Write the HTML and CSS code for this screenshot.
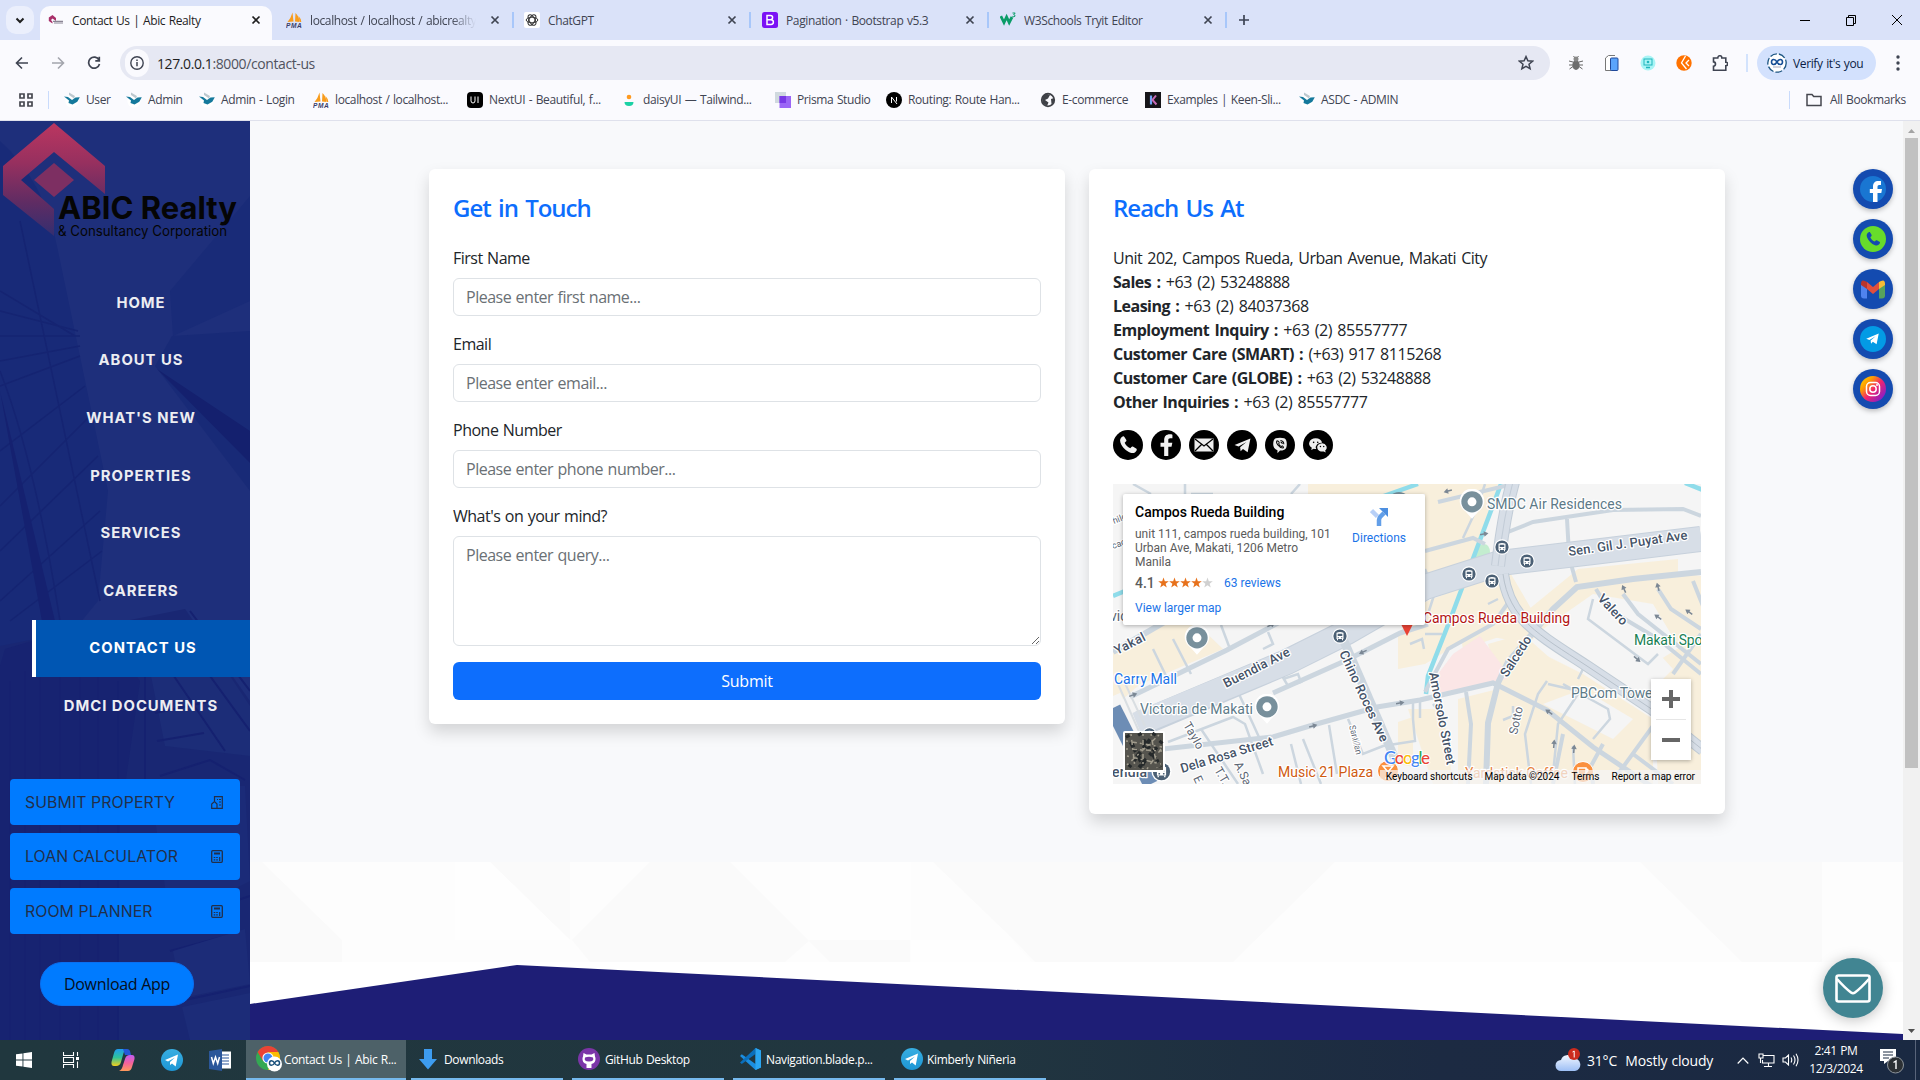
FILE: index.html
```html
<!DOCTYPE html>
<html lang="en">
<head>
<meta charset="utf-8">
<title>Contact Us | Abic Realty</title>
<link rel="stylesheet" href="styles.css">
</head>
<body>
<svg class="defs" width="0" height="0">
  <defs>
    <linearGradient id="logoGrad" x1="0" y1="0" x2="0" y2="1"><stop offset="0" stop-color="#bb3660"/><stop offset=".35" stop-color="#97305f"/><stop offset=".7" stop-color="#602c63"/><stop offset="1" stop-color="#332e70"/></linearGradient>
    <linearGradient id="insta" x1="0" y1="0.1" x2="1" y2="1"><stop offset="0" stop-color="#ffd600"/><stop offset=".25" stop-color="#ff9a00"/><stop offset=".5" stop-color="#f0256e"/><stop offset=".85" stop-color="#8a1fc4"/><stop offset="1" stop-color="#5c2bd0"/></linearGradient>
    <linearGradient id="tg" x1="0" y1="0" x2="0" y2="1"><stop offset="0" stop-color="#37aee2"/><stop offset="1" stop-color="#1e96d4"/></linearGradient>
    <linearGradient id="cloud" x1="0" y1="0" x2="0" y2="1"><stop offset="0" stop-color="#f1f6ff"/><stop offset="1" stop-color="#9dbff5"/></linearGradient>
    <linearGradient id="copA" x1="0" y1="0" x2="0" y2="1"><stop offset="0" stop-color="#1f9bf0"/><stop offset=".5" stop-color="#2fc39a"/><stop offset="1" stop-color="#f4d11c"/></linearGradient>
    <linearGradient id="copB" x1="0" y1="0" x2="0" y2="1"><stop offset="0" stop-color="#c05cf2"/><stop offset=".5" stop-color="#f5629b"/><stop offset="1" stop-color="#ff9a5a"/></linearGradient>
    <symbol id="close" viewBox="0 0 10 10"><path d="M1.5 1.5l7 7M8.5 1.5l-7 7" stroke="currentColor" stroke-width="1.7"/></symbol>
    <symbol id="pma" viewBox="0 0 16 16"><path d="M6.5 0.5L7.5 9.5 1.5 10Q5 6 6.5 0.5zM9.5 1Q13.5 5 13.5 10L9 9.5zM12.5 4Q15.5 7 15.3 10l-1.3 0z" fill="#f89c1c"/><text x="0" y="16" font-family="Liberation Sans" font-weight="700" font-style="italic" font-size="6.6" textLength="15.5" fill="#3b3f6b">PMA</text></symbol>
    <symbol id="asdc" viewBox="0 0 16 16"><circle cx="8" cy="9" r="6.6" fill="#fff"/><path d="M5 .5l6 3.500-1 2.500L5 3z" fill="#bcc8cf"/><path d="M0 4.500l4 .5 4 3 3.500-2.500 4.300-.2-2.500 4.500L8.500 12.500 4.500 11l.5-2.500z" fill="#15799c"/></symbol>
    <symbol id="plane" viewBox="0 0 24 24"><path d="M2 11.5L22 3 18.5 20.5 12.6 16.4 9.6 19.4 9 14.2 17 7.5 7 13.4z" fill="currentColor"/></symbol>
    <symbol id="phone" viewBox="0 0 24 24"><path d="M5.6 1.8C3 3.2 1.7 5.6 3 9.2c2 5.4 6.600 10 12 12 3.400 1.200 6-.2 7.300-2.700.5-1 .2-1.700-.6-2.200l-3.400-2.200c-.8-.5-1.600-.4-2.200.3l-1.300 1.500C11.600 14.600 9.300 12.300 8 9.200l1.500-1.300c.7-.6.8-1.400.3-2.200L7.700 2.300c-.5-.8-1.200-.9-2.100-.5z" fill="currentColor"/></symbol>
    <symbol id="fb" viewBox="0 0 24 24"><path d="M10 24V14H6V9.600h4V7c0-4.400 2.300-6.600 6.200-6.600 1.200 0 2.300.1 2.800.3v4h-2.300c-1.700 0-2.200.8-2.200 2.100v2.800h4.400L18 14h-3.500v10z" fill="currentColor"/></symbol>
    <symbol id="bus" viewBox="-8 -8 16 16"><circle r="7.700" fill="#fff"/><circle r="6.600" fill="#4b6075"/><path d="M-3.500-3.200Q0-5 3.500-3.200V3H-3.500z" fill="#fff"/><path d="M-2.300-2.300h4.600V0H-2.300zM-2.300 1.200h1.200v1h-1.200zM1.100 1.200h1.200v1H1.100z" fill="#4b6075"/><path d="M-2.500 3v1.300M2.500 3v1.300" stroke="#fff"/></symbol>
    <symbol id="pin" viewBox="-12 -12 24 30"><path d="M0 16L-6 9A11.500 11.500 0 1 1 6 9z" fill="#fff"/><circle r="10" fill="#78909c"/><circle r="4.200" fill="#fff"/></symbol>
    <symbol id="calc" viewBox="0 0 12 13"><rect x=".7" y=".7" width="10.600" height="11.600" rx="1" fill="none" stroke="#212f4a" stroke-width="1.300"/><path d="M3 3.500h6" stroke="#212f4a" stroke-width="2"/><path d="M2.700 7.500h1.600M5.200 7.500h1.600M2.700 9.800h1.600M5.200 9.800h1.600M8.700 7v4" stroke="#212f4a" stroke-width="1.200"/></symbol>
    <symbol id="arr" viewBox="-5 -3 10 6"><path d="M-4 0H1" stroke="#7b8794" stroke-width="1.500"/><path d="M0-2.800L4.500 0 0 2.800z" fill="#7b8794"/></symbol>
  </defs>
</svg>

<header class="browser">
  <div class="tabstrip">
    <button class="tabsearch"><svg width="10" height="7"><path d="M1.500 1.500l3.500 3.500 3.500-3.500" fill="none" stroke="#1f1f1f" stroke-width="2"/></svg></button>
    <div class="tab active">
      <svg class="fav" viewBox="0 0 16 16"><path d="M4.500 3L8 6v3L4.500 6.500 3 8l1.500 2v1.500L.8 9V5.500z" fill="#a9306a"/><path d="M5 9.300h10M6 11h9" stroke="#8a8494" stroke-width="1.200"/></svg>
      <span>Contact Us | Abic Realty</span><svg class="x"><use href="#close"/></svg>
    </div>
    <div class="tab nosep-left">
      <svg class="fav"><use href="#pma"/></svg>
      <span class="fade">localhost / localhost / abicrealty</span><svg class="x"><use href="#close"/></svg>
    </div>
    <div class="tab">
      <svg class="fav" viewBox="0 0 16 16"><rect width="16" height="16" rx="2" fill="#fff"/><g fill="none" stroke="#333"><ellipse cx="8" cy="8" rx="5.800" ry="2.800"/><ellipse cx="8" cy="8" rx="5.800" ry="2.800" transform="rotate(60 8 8)"/><ellipse cx="8" cy="8" rx="5.800" ry="2.800" transform="rotate(120 8 8)"/></g></svg>
      <span>ChatGPT</span><svg class="x"><use href="#close"/></svg>
    </div>
    <div class="tab">
      <svg class="fav" viewBox="0 0 16 16"><rect width="16" height="16" rx="2.500" fill="#7b12f5"/><path d="M5 3.500h3.500a2 2 0 0 1 0 4.200H5zm0 4.200h4a2.300 2.300 0 0 1 0 4.800H5z" fill="none" stroke="#fff" stroke-width="1.500"/></svg>
      <span>Pagination · Bootstrap v5.3</span><svg class="x"><use href="#close"/></svg>
    </div>
    <div class="tab">
      <svg class="fav" viewBox="0 0 16 16"><path d="M.8 4l3.200 6.500 2.600-5.500 2.600 5.500L12 5" fill="none" stroke="#0a9c68" stroke-width="2.800"/><path d="M12.500 1h2.700l-1.500 1.700q2 .3 1.200 1.600-.8 1-2.500.1" fill="none" stroke="#0a9c68"/></svg>
      <span>W3Schools Tryit Editor</span><svg class="x"><use href="#close"/></svg>
    </div>
    <svg class="plus" width="12" height="12"><path d="M6 1v10M1 6h10" stroke="#3c4354" stroke-width="1.700"/></svg>
    <div class="wincontrols">
      <svg width="12" height="12"><path d="M1 6.500h10" stroke="#000"/></svg>
      <svg width="12" height="12"><path d="M1.500 3.500h7v8h-7zM3.500 3.500v-2h7v8h-2" fill="none" stroke="#000"/></svg>
      <svg width="12" height="12"><path d="M1 1l10 10M11 1L1 11" stroke="#000"/></svg>
    </div>
  </div>

  <div class="toolbar">
    <div class="navbtns">
      <svg width="14" height="14"><path d="M13 7H2M7 1.500L1.500 7 7 12.500" fill="none" stroke="#3f4452" stroke-width="1.600"/></svg>
      <svg width="14" height="14"><path d="M1 7h11M7 1.500L12.500 7 7 12.500" fill="none" stroke="#a3a5ad" stroke-width="1.600"/></svg>
      <svg width="14" height="14"><path d="M12 4A5.500 5.500 0 1 0 12.500 8M12.300.8v4H8.300" fill="none" stroke="#3f4452" stroke-width="1.700"/></svg>
    </div>
    <div class="omnibox">
      <div class="siteinfo"><svg width="16" height="16"><circle cx="8" cy="8" r="6.200" fill="none" stroke="#3f4452" stroke-width="1.400"/><path d="M8 7v4.200M8 4.500v1.400" stroke="#3f4452" stroke-width="1.500"/></svg></div>
      <span class="url"><b>127.0.0.1</b>:8000/contact-us</span>
      <svg class="star" viewBox="0 0 16 16"><path d="M8 1.600l1.900 4.200 4.600.4-3.500 3 1.100 4.500L8 11.300l-4.100 2.400L5 9.200l-3.500-3 4.600-.4z" fill="none" stroke="#3f4452" stroke-width="1.500"/></svg>
    </div>
    <div class="exts">
      <svg viewBox="0 0 16 16"><path d="M1 6l4 1M15 6l-4 1M1 10h14M1.500 14L5 11.500M14.500 14L11 11.500M5.500 1l1.500 2M10.500 1L9 3" stroke="#666" fill="none"/><ellipse cx="8" cy="10" rx="3.600" ry="5" fill="#6d6d6d"/><circle cx="8" cy="4" r="2.500" fill="#888"/></svg>
      <svg viewBox="0 0 16 16"><path d="M9 15.500H1.500V3l3-2.500H11" fill="#fff" stroke="#777"/><rect x="6.500" y="3" width="7.500" height="12.500" rx="1" fill="#5ba4fb" stroke="#20489a"/></svg>
      <svg viewBox="0 0 16 16"><circle cx="8" cy="8" r="7.500" fill="#a9f4f5"/><rect x="4" y="4" width="8" height="6" fill="none" stroke="#21b5bd"/><path d="M6 12.500h4" stroke="#21b5bd" stroke-width="1.500"/><circle cx="8" cy="7" r="1.300" fill="#21b5bd"/></svg>
      <svg viewBox="0 0 16 16"><circle cx="8" cy="8" r="7.700" fill="#ff7200"/><path d="M9.500 1L5.500 8l5 6M13 5l-3 3 3 3" fill="none" stroke="#fff" stroke-width="1.300"/></svg>
      <svg viewBox="0 0 16 16"><path d="M1.500 3h4.300q.2-2.500 2.200-2.200Q9.800.7 9.800 3h4v4.300q2 .2 2 1.700t-2 1.700v4.500H1.500v-4q2-.3 2-2.200T1.500 6.900z" fill="none" stroke="#3f4452" stroke-width="1.600"/></svg>
    </div>
    <div class="verify">
      <svg width="20" height="20" viewBox="0 0 20 20"><circle cx="10" cy="10" r="9.200" fill="#fff" stroke="#1d5683" stroke-width="1.300" stroke-dasharray="7 2"/><path d="M10 9C8 5.500 4.500 6 4.500 9s3.500 3.500 5.500 0 5.500-3 5.500 0-3.500 3.500-5.500 0z" fill="none" stroke="#174e95" stroke-width="1.600"/><path d="M6 14h8" stroke="#aab"/></svg>
      <span>Verify it's you</span>
    </div>
    <svg class="dots" width="4" height="18"><circle cx="2" cy="3" r="1.700"/><circle cx="2" cy="9" r="1.700"/><circle cx="2" cy="15" r="1.700"/></svg>
  </div>

  <div class="bookmarks">
    <svg class="apps" width="14" height="14"><path d="M1 1h4v4H1zM9 1h4v4H9zM1 9h4v4H1zM9 9h4v4H9z" fill="none" stroke="#45474f" stroke-width="1.700"/></svg>
    <div class="bmgrid">
      <a><svg><use href="#asdc"/></svg><span>User</span></a>
      <a><svg><use href="#asdc"/></svg><span>Admin</span></a>
      <a><svg><use href="#asdc"/></svg><span>Admin - Login</span></a>
      <a><svg><use href="#pma"/></svg><span>localhost / localhost...</span></a>
      <a><svg viewBox="0 0 16 16"><rect width="16" height="16" rx="4" fill="#000"/><path d="M4 4.500v4.300q0 2.200 2 2.200t2-2.200V4.500M11 4.500V11" stroke="#fff" fill="none"/></svg><span>NextUI - Beautiful, f...</span></a>
      <a><svg viewBox="0 0 16 16"><circle cx="8" cy="5" r="2.300" fill="#ff9a1f"/><path d="M3.500 10h9q0 4-4.500 4t-4.500-4z" fill="#1bd1a5"/></svg><span>daisyUI — Tailwind...</span></a>
      <a><svg viewBox="0 0 16 16"><path d="M0 0h11v11H0z" fill="#d0d9df"/><path d="M4.500 4H16v12H4.500z" fill="#9b66f6"/><path d="M4.500 4H11v7H4.500z" fill="#7939e6"/></svg><span>Prisma Studio</span></a>
      <a><svg viewBox="0 0 16 16"><circle cx="8" cy="8" r="8" fill="#000"/><path d="M5.500 11V5l5.500 7M10.500 5v4.500" stroke="#fff" fill="none"/></svg><span>Routing: Route Han...</span></a>
      <a><svg viewBox="0 0 16 16"><circle cx="8" cy="8" r="6.300" fill="#fafafe" stroke="#3f4147" stroke-width="1.700"/><path d="M2 5l4-3.500L10 3 8 6.500 5 8l3.500 2.500L7 14 2.500 11zM11 7l3-1v5l-2.500 1z" fill="#3f4147"/></svg><span>E-commerce</span></a>
      <a><svg viewBox="0 0 16 16"><rect width="16" height="16" fill="#16151a"/><path d="M6 3.500v9" stroke="#6fa3f5" stroke-width="2.200"/><path d="M11 3.500L7.500 8l4 4.500" stroke="#c86ab5" fill="none" stroke-width="2"/></svg><span>Examples | Keen-Sli...</span></a>
      <a><svg><use href="#asdc"/></svg><span>ASDC - ADMIN</span></a>
    </div>
    <div class="allbm"><svg width="16" height="14"><path d="M1 1.500h5l1.700 2H15v9H1z" fill="none" stroke="#45474f" stroke-width="1.500"/></svg><span>All Bookmarks</span></div>
  </div>
</header>

<div class="viewport">
  <aside class="sidebar">
    <svg class="skyline" viewBox="0 0 250 919" preserveAspectRatio="none">
      <rect width="250" height="919" fill="#1e2f7b"/>
      <path d="M0 20Q45 60 58 130L108 370 98 480 0 600z" fill="#182a78"/>
      <path d="M250 75L170 170 173 215 250 180z" fill="#192b78"/><path d="M250 210L172 215 155 245 250 370z" fill="#182a77"/>
      <path d="M157 248L250 310V342z" fill="#14206e"/>
      <path d="M20 100L100 480M0 170L75 215M0 190l78 20M0 215h80M0 240l80-15M0 265l80-30M0 330l85-65M0 385l90-90M0 430l98-95M0 480l100-90M10 500l92-70M0 250Q35 340 60 500" stroke="#152472" stroke-width="1.500" fill="none"/>
      <path d="M0 270L55 500 42 500Z" fill="#152170"/>
      <path d="M0 525L185 488 250 580V919H0z" fill="#192773"/>
      <path d="M5 528L100 500 140 560 120 700 118 919H0V545z" fill="#172371"/>
      <path d="M150 550l60-25 40 60v50l-85-10z" fill="#1c2d78"/>
      <path d="M155 592l57-12M157 620l47-8M160 655l50-16 35 20M170 830l75-20M175 800l75-25M180 880l70-15M190 490l60 80M150 520l75 110M170 500l80 110M118 560v359M145 540v120" stroke="#152170" stroke-width="2" fill="none"/>
      <path d="M150 665l95 0 5 95-80 40z" fill="#1b2b78"/><path d="M173 830l72-22 5 55-68 14zM182 886l68-14v47h-60z" fill="#1c2c78"/>
      <path d="M10 560L10 919M25 550V919M40 545V919M60 540V919M80 540V919M98 540V919" stroke="#162170" fill="none"/>
    </svg>
    <svg class="logo" width="250" height="128" viewBox="0 0 250 128">
      <path d="M54 2L105 45V73L54 31 21 59 54 88V115L3 74V45z" fill="url(#logoGrad)"/>
      <path d="M54 42L74 59 54 76 34 59z" fill="#7d2f62"/>
      <text x="58" y="98" class="logo-a" textLength="179" lengthAdjust="spacingAndGlyphs">ABIC Realty</text>
      <text x="58" y="115" class="logo-b" textLength="169" lengthAdjust="spacingAndGlyphs">&amp; Consultancy Corporation</text>
    </svg>
    <nav class="menu">
      <a>HOME</a><a>ABOUT US</a><a>WHAT'S NEW</a><a>PROPERTIES</a><a>SERVICES</a><a>CAREERS</a><a class="current">CONTACT US</a><a>DMCI DOCUMENTS</a>
    </nav>
    <div class="tools">
      <a>SUBMIT PROPERTY<svg width="12" height="13" viewBox="0 0 12 13"><path d="M3.500 5V.7h7.800v11.600H.7V8L3.500 5.500 6 8v4" fill="none" stroke="#212f4a" stroke-width="1.200"/><path d="M6 3.500h1M8 3.500h2M8 6h2M8 9h2" stroke="#212f4a" stroke-width="1.200"/></svg></a>
      <a>LOAN CALCULATOR<svg width="12" height="13"><use href="#calc"/></svg></a>
      <a>ROOM PLANNER<svg width="12" height="13"><use href="#calc"/></svg></a>
    </div>
    <a class="download">Download App</a>
  </aside>

  <main class="page">
    <section class="cards">
      <form class="card">
        <h2>Get in Touch</h2>
        <label>First Name</label><input placeholder="Please enter first name...">
        <label>Email</label><input placeholder="Please enter email...">
        <label>Phone Number</label><input placeholder="Please enter phone number...">
        <label>What's on your mind?</label><textarea placeholder="Please enter query..."></textarea>
        <button type="button" class="submit">Submit</button>
      </form>
      <div class="card">
        <h2>Reach Us At</h2>
        <ul class="contacts">
          <li class="addr">Unit 202, Campos Rueda, Urban Avenue, Makati City</li>
          <li><b>Sales :</b> +63 (2) 53248888</li>
          <li><b>Leasing :</b> +63 (2) 84037368</li>
          <li><b>Employment Inquiry :</b> +63 (2) 85557777</li>
          <li><b>Customer Care (SMART) :</b> (+63) 917 8115268</li>
          <li><b>Customer Care (GLOBE) :</b> +63 (2) 53248888</li>
          <li><b>Other Inquiries :</b> +63 (2) 85557777</li>
        </ul>
        <div class="social">
          <i><svg width="20" height="20"><use href="#phone"/></svg></i>
          <i><svg width="22" height="22"><use href="#fb"/></svg></i>
          <i><svg width="20" height="14" viewBox="0 0 20 14"><rect x=".5" y=".5" width="19" height="13" fill="#eee"/><path d="M1 1l9 7 9-7M1 13l6.500-6.500M19 13l-6.500-6.500" fill="none" stroke="#000" stroke-width="1.300"/></svg></i>
          <i><svg width="19" height="19"><use href="#plane"/></svg></i>
          <i><svg width="16" height="17" viewBox="0 0 18 20"><path d="M4 1.500Q9 0 14 1.500 17 3 17 8.500T14 15q-2 1-5 1l-3 3v-3.500Q1 14 1 8.500T4 1.500z" fill="#eee"/><path d="M5.500 4.500Q4 6 6.500 9.500t6 3.500q1.500-1-.8-2.500-1 .8-1.500.5Q8 9.500 7.500 8q1-.8.300-2T5.500 4.500zM9.500 4q4 .5 4 4.500M9.700 6q2 .3 2 2.300" fill="none" stroke="#000" stroke-width="1.200"/></svg></i>
          <i><svg width="20" height="17" viewBox="0 0 22 18"><path d="M8.500 1a7 5.800 0 0 0-4.300 10.500L3.500 14l2.800-1.400Q8 13 9 12.800A6 5 0 0 1 15.500 6 7 5.600 0 0 0 8.500 1z" fill="#eee"/><path d="M15.500 6.500a5.600 4.600 0 1 0 1.800 9l2.200 1.200-.6-2.200a5 4.600 0 0 0-3.400-8z" fill="#eee"/><g fill="#000"><circle cx="6.200" cy="5.500" r=".9"/><circle cx="10.700" cy="5.500" r=".9"/><circle cx="13.700" cy="10" r=".8"/><circle cx="17.300" cy="10" r=".8"/></g></svg></i>
        </div>
        <div class="map">
          <svg class="tiles" viewBox="0 0 588 300">
            <rect width="588" height="300" fill="#f5f5f5"/>
            <g fill="#f8efdc">
              <path d="M195 0H385L355 100 312 115V10H195z"/>
              <path d="M0 165L55 135 85 141 110 165 0 212z"/><path d="M312 118L395 85 430 145 415 160 365 150 345 160 312 180 285 185 285 150z"/>
              <path d="M465 85L565 75V88L588 92V200L540 120 480 110 430 145 410 130z"/>
              <path d="M345 140L400 115 410 145 350 165zM420 165L470 190 540 235V300H420L375 215z"/>
              <path d="M540 180L588 150V300H545zM295 225L320 300H340L330 225zM375 160L410 150 455 190 440 225 385 200zM0 195l25-8v15L10 215z"/>
              <path d="M385 205L440 232 460 300H345V215z"/><path d="M285 238l15-5v50l-15-3z"/>
            </g>
            <path d="M430 220L470 205 520 235 500 255zM475 175L530 215 560 185 510 130zM490 110L520 128 545 168 530 190z" fill="#f5f5f5"/>
            <path d="M367 152L388 180 394 195 378 199 325 209 325 190 340 170z" fill="#fbe6e6"/>
            <path d="M364 62q12-6 13 6 0 8-12 12l-7 2z" fill="#c3edcf"/>
            <path d="M0 112L12 107M265 14L305 0M388 0L367 56 337 136 315 192 313 210M572-1L590 6" stroke="#8fdcea" stroke-width="4.500" fill="none"/>
            <path d="M0 224L38 300" stroke="#6d8db5" stroke-width="16"/>
            <g stroke="#ccd6df" fill="none" stroke-width="5">
              <path d="M17 213L114 166 167 138M160 209L234 176 287 149 315 140M50 265L160 253 200 241 264 223 307 216 380 199 434 226 480 263 538 302"/>
              <path d="M0 168L55 136M414 156L395 178 385 199 375 239 373 300M414 156L440 125 464 103 520 95 588 88" stroke-width="6"/>
              <path d="M312 67L360 54 372 60M390 50L420 38 500 26 570 25 588 32M325 18L400 0M463 98L458 80M454 35l2 35M312 208L335 165 380 140 395 119M353 208L358 240 355 300" stroke-width="4"/>
              <path d="M483 105L495 125 545 155 588 190M510 110L525 130 588 180M545 105L558 125 588 145M580 97l10 25M588 150L560 190M545 235L505 290M490 260L478 282 480 300M520 270L560 300M450 250L440 300" stroke-width="4"/>
            </g>
            <g stroke="#ccd6df" fill="none" stroke-width="2.500">
              <path d="M72 0v10M78 10 100 10M20 0 38 10M178 10 187 0M40 165L57 200M60 155L78 190M108 141L117 165M155 148L160 160 150 165M165 185L175 202 188 198 185 190 170 195M125 208L140 240 150 262M55 258L120 233 132 240 150 290M178 260L188 300M190 255L208 300M216 241L224 290M235 235L250 270 270 262 302 257 300 235M300 235V215M88 245L125 300"/>
              <path d="M434 197L425 210 412 250 418 300M450 200L495 225 497 235 480 255M465 210L445 240 440 290M480 115L475 135 535 180 545 170M435 200L470 208M312 85l8 20M350 54l14-30 8-24M388 50l-3 30M322 108 315 130M312 150l17 0M297 160l12-5 2 10M465 195l6-12M400 222v10l-10 4M375 120l10-5M460 262l2 40M320 220l8 10M307 216v18"/>
            </g>
            <path d="M27 240L174 178 234 148 312 103 387 79 480 68 588 55" stroke="#c7d1dc" stroke-width="26" fill="none"/>
            <path d="M24 240L174 178 234 148 312 103 387 79 480 68 588 55" stroke="#d7dee7" stroke-width="24" fill="none"/>
            <path d="M385 82Q391 30 400-2" stroke="#c2ccd7" stroke-width="14" fill="none"/><path d="M385 82Q391 30 400-2" stroke="#d7dee7" stroke-width="12" fill="none"/><path d="M385 82Q391 30 400-2" stroke="#c2ccd7" fill="none"/>
            <path d="M390 90C396 135 425 150 474 182L540 226 590 266" stroke="#bfcad4" stroke-width="12" fill="none"/><path d="M390 90C396 135 425 150 474 182L540 226 590 266" stroke="#d7dee7" stroke-width="10" fill="none"/><path d="M390 90C396 135 425 150 474 182L540 226 590 266" stroke="#b7c1cb" fill="none"/>
            <path d="M230 155L282 275" stroke="#ccd6df" stroke-width="9"/>
            <path d="M32 242L10 195M28 252L5 200" stroke="#d9dee2" stroke-width="2"/>
            <g>
              <g transform="translate(20 211) rotate(-20)"><use href="#arr" x="-5" y="-3" width="10" height="6"/></g>
              <g transform="translate(158 141) rotate(-25)"><use href="#arr" x="-5" y="-3" width="10" height="6"/></g>
              <g transform="translate(250 168) rotate(155)"><use href="#arr" x="-5" y="-3" width="10" height="6"/></g>
              <g transform="translate(200 242) rotate(-15)"><use href="#arr" x="-5" y="-3" width="10" height="6"/></g>
              <g transform="translate(287 219) rotate(-10)"><use href="#arr" x="-5" y="-3" width="10" height="6"/></g>
              <g transform="translate(335 7) rotate(165)"><use href="#arr" x="-5" y="-3" width="10" height="6"/></g>
              <g transform="translate(371 50) rotate(-10)"><use href="#arr" x="-5" y="-3" width="10" height="6"/></g>
              <g transform="translate(511 105) rotate(-115)"><use href="#arr" x="-5" y="-3" width="10" height="6"/></g>
              <g transform="translate(545 103) rotate(-105)"><use href="#arr" x="-5" y="-3" width="10" height="6"/></g>
              <g transform="translate(545 133) rotate(-145)"><use href="#arr" x="-5" y="-3" width="10" height="6"/></g>
              <g transform="translate(576 128) rotate(-145)"><use href="#arr" x="-5" y="-3" width="10" height="6"/></g>
              <g transform="translate(524 175) rotate(40)"><use href="#arr" x="-5" y="-3" width="10" height="6"/></g>
              <g transform="translate(436 228) rotate(-145)"><use href="#arr" x="-5" y="-3" width="10" height="6"/></g>
              <g transform="translate(441 260) rotate(-85)"><use href="#arr" x="-5" y="-3" width="10" height="6"/></g>
              <g transform="translate(461 265) rotate(-85)"><use href="#arr" x="-5" y="-3" width="10" height="6"/></g>
            </g>
            <path d="M286 136h16l-8 16z" fill="#ea4335"/>
            <g class="lbl road">
              <text transform="translate(456 72) rotate(-8)" textLength="120">Sen. Gil J. Puyat Ave</text>
              <text transform="translate(484 115) rotate(47)" textLength="37">Valero</text>
              <text transform="translate(394 194) rotate(-57)" textLength="46">Salcedo</text>
              <text transform="translate(316 189) rotate(79)" textLength="94">Amorsolo Street</text>
              <text transform="translate(226 169) rotate(65)" textLength="99">Chino Roces Ave</text>
              <text transform="translate(113 204) rotate(-27)" textLength="73">Buendia Ave</text>
              <text transform="translate(4 171) rotate(-27)" textLength="33">Yakal</text>
              <text transform="translate(69 289) rotate(-17)" textLength="96">Dela Rosa Street</text>
              <text x="-1" y="293" font-size="14" textLength="35">endia</text>
            </g>
            <g class="lbl minor">
              <text transform="translate(404 251) rotate(-78)" textLength="28">Sotto</text>
              <text transform="translate(70 241) rotate(60)" textLength="29">Taylo</text>
              <text transform="translate(101 286) rotate(60)">T.T.</text>
              <text transform="translate(121 280) rotate(65)">A.Sa</text>
              <text transform="translate(80 294) rotate(65)">E.</text>
              <text transform="translate(236 242) rotate(76)" font-size="9" textLength="30">Santillan</text>
              <text transform="translate(1 40) rotate(-22)" font-size="9">hilo</text>
              <text transform="translate(0 65) rotate(-20)" font-size="9">cac</text>
              <text x="-3" y="137" font-size="14">vic</text>
            </g>
            <g class="lbl poi">
              <text x="374" y="25" textLength="135">SMDC Air Residences</text>
              <text x="27" y="230" textLength="113">Victoria de Makati</text>
              <text x="458" y="214" textLength="86">PBCom Tower</text>
              <text x="310" y="139" textLength="147" fill="#b31412">Campos Rueda Building</text>
              <text x="521" y="161" fill="#188054" textLength="73">Makati Spor</text>
              <text x="1" y="200" fill="#1a73e8" textLength="63">Carry Mall</text>
              <text x="165" y="293" fill="#cf5a10" textLength="95">Music 21 Plaza</text>
              <text x="352" y="294" fill="#e8833e" textLength="103">Yardstick Coffee</text>
            </g>
            <use href="#pin" x="346" y="5" width="26" height="32"/><use href="#pin" x="71" y="141" width="26" height="32"/><use href="#pin" x="141" y="210" width="26" height="32"/>
            <use href="#bus" x="381" y="55" width="16" height="16"/><use href="#bus" x="406" y="69" width="16" height="16"/><use href="#bus" x="348" y="82" width="16" height="16"/><use href="#bus" x="371" y="89" width="16" height="16"/><use href="#bus" x="219" y="144" width="16" height="16"/><use href="#bus" x="29" y="243" width="15" height="15"/><use href="#bus" x="38" y="277" width="21" height="21"/>
            <circle cx="286" cy="20" r="12" fill="#78909c"/>
            <g fill="#fa903e" stroke="#fff"><circle cx="275" cy="287" r="10.500"/><circle cx="470" cy="288" r="10.500"/></g>
            <path d="M270 282h10l-5 6zM275 287v7M272 294h6M465 284h8v5q-4 5-8 0zM473 285q4 0 0 4" stroke="#fff" fill="none" stroke-width="1.500"/>
            <text x="271" y="280" class="goog" textLength="46"><tspan fill="#4285f4">G</tspan><tspan fill="#ea4335">o</tspan><tspan fill="#fbbc04">o</tspan><tspan fill="#4285f4">g</tspan><tspan fill="#34a853">l</tspan><tspan fill="#ea4335">e</tspan></text>
          </svg>
          <div class="place">
            <div class="place-text">
              <h3>Campos Rueda Building</h3>
              <p>unit 111, campos rueda building, 101<br>Urban Ave, Makati, 1206 Metro<br>Manila</p>
              <div class="rating"><span>4.1</span><svg width="55" height="12" viewBox="0 0 55 12"><g fill="#e7711b"><path id="st" d="M5.500.5l1.300 3.800h4L7.600 6.700l1.200 3.900-3.300-2.400-3.300 2.400 1.200-3.900L.2 4.300h4z"/><use href="#st" x="11"/><use href="#st" x="22"/><use href="#st" x="33"/></g><path d="M49.500.5l1.300 3.800h4l-3.200 2.400 1.200 3.900-3.300-2.400-3.300 2.400 1.200-3.900-3.200-2.400h4z" fill="#d0d0d0"/></svg><a>63 reviews</a></div>
              <a class="larger">View larger map</a>
            </div>
            <div class="directions"><svg width="18" height="18"><path d="M1.500 2.500l6 6" stroke="#b8d0f7" stroke-width="4.500"/><path d="M9 18V12q0-2 1.500-3.500L14 5" fill="none" stroke="#639fe8" stroke-width="4.500"/><path d="M9 0h9v9z" fill="#4d8fe0"/></svg><span>Directions</span></div>
          </div>
          <svg class="sat" viewBox="0 0 42 41"><rect width="42" height="41" rx="2" fill="#fff"/><path d="M2 2h38v37H2z" fill="#55544e"/><g stroke="#25292a" stroke-width="4" stroke-dasharray="3 5 6 2"><path d="M4 4l18 34M16 2l22 34M32 2L6 36M39 10L14 39"/></g><g stroke="#a19c8d" stroke-width="1.500" stroke-dasharray="2 4 5 3"><path d="M3 10l36 6M3 18l36 2M4 25l34 8M8 3l4 34M20 3v35M28 3l6 34M4 34L36 4M24 38l14-20"/></g></svg>
          <div class="zoomctl"><span><svg width="18" height="18"><path d="M9 0v18M0 9h18" stroke="#666" stroke-width="4"/></svg></span><span><svg width="18" height="18"><path d="M0 9h18" stroke="#666" stroke-width="4"/></svg></span></div>
          <div class="credits"><span>Keyboard shortcuts</span><span>Map data ©2024</span><span>Terms</span><span>Report a map error</span></div>
        </div>
      </div>
    </section>
    <svg class="footer" viewBox="0 0 1653 178">
      <rect width="1653" height="178" fill="#fff"/><rect width="1653" height="100" fill="#fdfdfd"/>
      <g fill="#fafafa"><path d="M0 0H12L92 78V100H0zM240 0H320V78zM400 0H480L558 78H322zM322 78H558L580 100H340zM560 0V78L535 100H660V0H560zM683 0H764V78zM764 0H1085L983 100H785L764 78zM1390 0H1572V100H1492z"/></g>
      <path d="M560 0h101v78H560zM661 78h101l20 22H661zM205 0h35l80 78H205z" fill="#fefefe"/>
      <path d="M0 142L267 103 1653 172V178H0z" fill="#1e1e76"/>
    </svg>
    <div class="floaters">
      <i><svg width="26" height="26" viewBox="0 0 26 26"><circle cx="13" cy="13" r="13" fill="#1976d2"/><path d="M13 26V17H9.800v-4H13v-2.500C13 7 15 5 18.300 5H21v4h-2q-1.500 0-1.500 1.500V13H22l-.7 4h-3.800v9z" fill="#fff"/></svg></i>
      <i><svg class="wa" width="26" height="26" viewBox="0 0 26 26"><circle cx="13" cy="13" r="13" fill="#67dc2b"/><use href="#phone" x="5" y="5" width="16" height="16"/></svg></i>
      <i><svg width="26" height="26" viewBox="0 0 26 26"><path d="M1 8l6 4v10.500H4q-3 0-3-3z" fill="#4f83ee"/><path d="M25 8l-6 4v10.500h3q3 0 3-3z" fill="#56a35c"/><path d="M7 6l6 5 6-5v7l-6 5-6-5z" fill="#e04f3d"/><path d="M1 8q0-5 4-3l2 1v7L1 9z" fill="#b8352d"/><path d="M25 8q0-5-4-3l-2 1v7l6-4z" fill="#f5bb36"/></svg></i>
      <i><svg width="26" height="26" viewBox="0 0 26 26"><circle cx="13" cy="13" r="13" fill="#039be5"/><use href="#plane" x="5" y="5.500" width="15" height="15"/></svg></i>
      <i><svg width="26" height="26" viewBox="0 0 26 26"><circle cx="13" cy="13" r="13" fill="url(#insta)"/><rect x="6.500" y="6.500" width="13" height="13" rx="4" fill="none" stroke="#fff" stroke-width="1.500"/><circle cx="13" cy="13" r="3.200" fill="none" stroke="#fff" stroke-width="1.500"/><circle cx="17" cy="9" r="1" fill="#fff"/></svg></i>
    </div>
    <div class="mailbtn"><svg width="36" height="29"><rect x="1.500" y="1.500" width="33" height="26" rx="2" fill="none" stroke="#fff" stroke-width="2.600"/><path d="M2 5Q10 14 16 18.500q2 1.500 4 0Q26 14 34 5" fill="none" stroke="#fff" stroke-width="2.600"/></svg></div>
  </main>
  <div class="scrollbar"><svg width="7" height="4"><path d="M0 4L3.500 0 7 4z" fill="#a3a3a3"/></svg><div class="thumb"></div><svg width="7" height="4"><path d="M0 0h7L3.500 4z" fill="#505050"/></svg></div>
</div>

<footer class="taskbar">
  <div class="pinned">
    <svg width="16" height="16"><path d="M0 2.300L6.500 1.400V7.600H0zM7.400 1.200L16 0v7.600H7.400zM0 8.400h6.500v6.200L0 13.700zM7.400 8.400H16V16l-8.600-1.200z" fill="#fff"/></svg>
    <svg width="16" height="16"><path d="M.5 0v3.500h10V0M.5 16v-3.500h10V16M.5 5.500h10v5H.5zM14.500 0v4M14.500 9.500V16" fill="none" stroke="#fff" stroke-width="1.100"/><path d="M13 5h3v3h-3z" fill="#fff"/></svg>
    <svg width="24" height="22" viewBox="0 0 24 22"><path d="M7 0h9q-3 1-4 6l-2 7q-1 4-5 4H3Q0 17 .5 13L3 4Q4 0 7 0z" fill="url(#copA)"/><path d="M12 0h4q3 0 3.500 4l.5 2h-6z" fill="#2458d8"/><path d="M17 22H8q3-1 4-6l2-6q1-4 5-4h2q3 0 2.500 4L21 18q-1 4-4 4z" fill="url(#copB)"/></svg>
    <svg width="22" height="22" viewBox="0 0 22 22"><circle cx="11" cy="11" r="11" fill="url(#tg)"/><path d="M4 11l13-5.500-2.300 12L11 14.500l-2 1.500v-3l5-4.500-7 4z" fill="#fff"/></svg>
    <svg width="22" height="22" viewBox="0 0 22 22"><path d="M12 2.500h10v17H12z" fill="#fff"/><path d="M13 6h7M13 9h7M13 12h7M13 15h7" stroke="#2b579a"/><path d="M0 2L13 0v22L0 20z" fill="#2b579a"/><path d="M2.500 8L4.300 14.500 6.500 8l2.200 6.500L10.500 8" fill="none" stroke="#fff" stroke-width="1.500"/></svg>
  </div>
  <div class="task on"><svg width="26" height="26" viewBox="0 0 26 26"><circle cx="12" cy="12" r="12" fill="#34a853"/><path d="M1.600 6A12 12 0 0 1 22.400 6H12L7 15z" fill="#ea4335"/><path d="M22.400 6A12 12 0 0 1 12 24l5-9-5-9z" fill="#fbbc04"/><circle cx="12" cy="12" r="5.600" fill="#fff"/><circle cx="12" cy="12" r="4.500" fill="#4285f4"/><circle cx="18.500" cy="18" r="7.500" fill="#fff"/><path d="M18.500 17c-1.500-3-5-3-5 0s3.500 3 5 0 5-3 5 0-3.500 3-5 0z" fill="none" stroke="#174e7a" stroke-width="1.500"/></svg><span>Contact Us | Abic R...</span></div>
  <div class="task"><svg width="24" height="22" viewBox="0 0 24 22"><path d="M8 1h8v10h5l-9 10.500L3 11h5z" fill="#3d9cf0"/></svg><span>Downloads</span></div>
  <div class="task"><svg width="24" height="24" viewBox="0 0 24 24"><circle cx="12" cy="12" r="11" fill="#7b35a8"/><path d="M9.500 21v-4Q5 16 5.500 11L6 9.500 6.500 6 9.500 7.500h5l3-1.500.5 3.500.5 1.500q.5 5-4 6v4z" fill="#fff"/><path d="M8 10.500q4-1.500 8 0 1.500 4-4 4t-4-4z" fill="#7b35a8"/></svg><span>GitHub Desktop</span></div>
  <div class="task"><svg width="24" height="24" viewBox="0 0 24 24"><path d="M17.500 1L23 3.500v17L17.500 23 2 9l1.800-1.800L17.500 17z" fill="#1b8ee0"/><path d="M17.500 1v6L3.800 17 2 15.500z" fill="#0a6fbc"/><path d="M17.500 1L23 3.500v17L17.500 23z" fill="#2aa6f2"/></svg><span>Navigation.blade.p...</span></div>
  <div class="task last"><svg width="22" height="22" viewBox="0 0 22 22"><circle cx="11" cy="11" r="11" fill="url(#tg)"/><path d="M4 11l13-5.500-2.300 12L11 14.500l-2 1.500v-3l5-4.500-7 4z" fill="#fff"/></svg><span>Kimberly Niñeria</span></div>
  <div class="tray">
    <svg width="26" height="26" viewBox="0 0 26 26"><path d="M6 24a5.500 5.500 0 0 1 0-11 6.500 6.500 0 0 1 12-1.500A6 6 0 0 1 20 24z" fill="url(#cloud)"/><circle cx="19" cy="7" r="6" fill="#cc2b1d"/><path d="M17.500 5l1.700-1v6.500" stroke="#fff" fill="none"/></svg>
    <span class="weather">31°C&nbsp; Mostly cloudy</span>
    <svg class="chev" width="12" height="7"><path d="M.7 6.500L6 1l5.300 5.500" fill="none" stroke="#fff" stroke-width="1.200"/></svg>
    <svg class="net" width="17" height="15"><path d="M5 2.500h11v7.500H4.500V7M10.500 10v3M6 13.500h8M1 1h4v4H1zM2.500 5v5" fill="none" stroke="#fff" stroke-width="1.100"/></svg>
    <svg class="vol" width="17" height="14"><path d="M1 5h2.500L6.500 2v10L3.500 9H1zM9 4.500q1.500 2.500 0 5M11.500 2.500q3 4.500 0 9M14 .8q4 6.200 0 12.400" fill="none" stroke="#fff" stroke-width="1.100"/></svg>
    <div class="clock"><span>2:41 PM</span><span>12/3/2024</span></div>
    <svg class="note" width="26" height="26" viewBox="0 0 26 26"><path d="M1 1h16v12H9l-4 3v-3H1z" fill="#fff"/><path d="M4 4h10M4 7h10M4 10h6" stroke="#1b2a41"/><circle cx="16.500" cy="17" r="8" fill="#2c3034" stroke="#8e959c"/><path d="M14.500 14.500l2.500-1.500v8" stroke="#fff" fill="none" stroke-width="1.400"/></svg>
  </div>
</footer>
</body>
</html>
```
FILE: styles.css
```css
* { box-sizing: border-box; }
body { margin: 0; width: 1920px; height: 1080px; overflow: hidden; display: flex; flex-direction: column; font-family: "Open Sans", "Noto Sans", sans-serif; color: #212529; }
.defs { position: absolute; }
svg { flex: none; display: block; }

/* browser chrome */
.browser { height: 121px; flex: none; background: #fafafe; border-bottom: 1px solid #dfe1ec; font-size: 12px; letter-spacing: -.38px; word-spacing: .8px; color: #3f4452; }
.tabstrip { height: 40px; background: #dae2f9; display: flex; align-items: center; padding-left: 6px; }
.tabsearch { width: 28px; height: 28px; border: 0; border-radius: 10px; background: #ebeffc; display: flex; align-items: center; justify-content: center; margin-right: 6px; padding: 0; }
.tab { width: 238px; height: 34px; display: flex; align-items: center; padding: 0 9px 0 11px; position: relative; color: #3f4452; }
.tab span { flex: 1; margin-left: 8px; white-space: nowrap; overflow: hidden; }
.tab::after { content: ""; position: absolute; right: 0; top: 9px; width: 2px; height: 16px; background: #a8c7fa; }
.tab.active { width: 232px; height: 34px; align-self: flex-end; background: #fafafe; border-radius: 10px 10px 0 0; color: #1f1f1f; padding: 0 11px 6px 8px; margin-right: 4px; }
.tab.active::after { display: none; }
.nosep-left { margin-right: -1px; padding-left: 10px; }
.fade { -webkit-mask-image: linear-gradient(90deg, #000 85%, transparent); mask-image: linear-gradient(90deg, #000 85%, transparent); margin-right: 14px; }
.fav { width: 16px; height: 16px; }
.x { width: 10px; height: 10px; }
.tab .x { margin-right: 5px; }
.tab.active .x { margin-right: 0; }
.plus { margin-left: 11px; }
.wincontrols { margin-left: auto; display: flex; gap: 34px; padding-right: 17px; }
.toolbar { height: 46px; display: flex; align-items: center; }
.navbtns { display: flex; gap: 22px; padding-left: 15px; width: 120px; }
.omnibox { width: 1430px; height: 34px; border-radius: 17px; background: #e6e8f3; display: flex; align-items: center; padding: 0 16px 0 5px; }
.siteinfo { width: 24px; height: 28px; border-radius: 14px; background: #fafafe; display: flex; align-items: center; justify-content: center; }
.url { flex: 1; margin-left: 8px; font-size: 14px; letter-spacing: -.4px; color: #50535e; }
.url b { font-weight: 400; color: #1f1f1f; }
.star { width: 16px; height: 16px; }
.exts { display: flex; gap: 20px; padding-left: 18px; width: 198px; height: 18px; align-items: center; border-right: 2px solid #d3e3fd; }
.exts svg { width: 16px; height: 18px; }
.verify { margin-left: 9px; width: 119px; height: 34px; border-radius: 17px; background: #d3e1fd; display: flex; align-items: center; padding-left: 10px; gap: 6px; color: #0a1d45; }
.dots { margin-left: 20px; fill: #3f4452; }
.bookmarks { height: 27px; display: flex; align-items: center; }
.apps { margin: 0 15px 0 19px; }
.bmgrid { display: grid; grid-template-columns: 62px 73px 114px 154px 154px 154px 111px 154px 105px 154px 110px; padding-left: 15px; border-left: 1px solid #c9dbfc; height: 18px; align-items: center; }
.bmgrid a { display: flex; align-items: center; gap: 6px; white-space: nowrap; }
.bmgrid svg { width: 16px; height: 16px; }
.allbm { margin-left: auto; display: flex; align-items: center; gap: 8px; width: 131px; border-left: 1px solid #c9dbfc; padding-left: 16px; height: 18px; white-space: nowrap; }

/* site */
.viewport { height: 919px; flex: none; display: flex; }
.sidebar { width: 250px; height: 919px; position: relative; display: flex; flex-direction: column; overflow: hidden; background: #1e2f7b; font-family: Inter, "Open Sans", sans-serif; }
.skyline { position: absolute; inset: 0; width: 250px; height: 919px; }
.logo, .menu, .tools, .download { position: relative; }
.logo-a { font: 700 31px Inter, sans-serif; fill: #050505; }
.logo-b { font: 400 14px Inter, sans-serif; fill: #050505; }
.menu { margin: 25px 0 0 32px; display: flex; flex-direction: column; }
.menu a { height: 57.600px; display: flex; align-items: center; justify-content: center; color: #ecedf2; font-weight: 700; font-size: 14.800px; letter-spacing: .98px; }
.menu .current { background: #0056b3; border-left: 4px solid #fff; color: #fff; }
.tools { margin: 44px 10px 0; display: flex; flex-direction: column; gap: 8px; }
.tools a { height: 46.500px; border-radius: 4px; background: #007bff; display: flex; align-items: center; justify-content: space-between; padding: 0 17px 0 15px; font-size: 15.800px; letter-spacing: .1px; color: #212f4a; }
.download { margin: 28px 0 0 40px; width: 154px; height: 44px; border-radius: 22px; background: #007bff; border: 1px solid #0a6ff0; display: flex; align-items: center; justify-content: center; font-family: "Open Sans", sans-serif; font-size: 16px; letter-spacing: -.3px; color: #060e20; }

.page { width: 1653px; height: 919px; background: #f8f9fb; position: relative; display: flex; flex-direction: column; }
.cards { display: flex; gap: 24px; padding: 48px 0 0 179px; height: 741px; align-items: flex-start; }
.card { width: 636px; background: #fff; border-radius: 6px; box-shadow: 0 8px 16px rgba(0, 0, 0, .15); padding: 24px; display: flex; flex-direction: column; font-size: 16px; line-height: 24px; letter-spacing: -.5px; word-spacing: .8px; }
.card h2 { margin: 0 0 24px; font-size: 24px; line-height: 29px; font-weight: 600; color: #0d6efd; letter-spacing: -1px; word-spacing: 2px; }
.card label { margin-bottom: 8px; }
.card input, .card textarea { width: 588px; height: 38px; margin: 0 0 16px; border: 1px solid #dee2e6; border-radius: 6px; padding: 6px 12px; font: inherit; letter-spacing: inherit; word-spacing: inherit; background: #fff; }
.card textarea { height: 110px; }
.card ::placeholder { color: #6a7075; opacity: 1; }
.submit { height: 38px; border: 0; border-radius: 6px; background: #0d6efd; color: #fff; font: inherit; letter-spacing: -.25px; }
.contacts { list-style: none; margin: 0 0 16px; padding: 0; letter-spacing: -.4px; word-spacing: 1.5px; }
.contacts .addr { letter-spacing: -.52px; }
.contacts b { font-weight: 700; letter-spacing: -.5px; }
.social { display: flex; gap: 8px; margin-bottom: 24px; }
.social i { width: 30px; height: 30px; border-radius: 50%; background: #000; color: #f2f2f2; display: flex; align-items: center; justify-content: center; }
.map { position: relative; width: 588px; height: 300px; margin-bottom: 6px; overflow: hidden; font-family: Roboto, sans-serif; letter-spacing: 0; word-spacing: 0; }
.tiles { width: 588px; height: 300px; font-family: Roboto, sans-serif; }
.lbl { paint-order: stroke; stroke: #fff; stroke-width: 2.500px; stroke-linejoin: round; }
.road { font-size: 13px; font-weight: 500; fill: #455368; }
.minor { font-size: 12px; fill: #5c6673; }
.poi { font-size: 14px; fill: #5d7a88; }
.goog { font: 500 17px Lato, sans-serif; paint-order: stroke; stroke: #fff; stroke-width: 2px; }
.place { position: absolute; left: 10px; top: 10px; width: 302px; height: 131px; background: #fff; border-radius: 2px; box-shadow: 0 1px 4px rgba(0, 0, 0, .3); display: flex; padding: 10px 19px 0 12px; justify-content: space-between; font-size: 12px; line-height: 14px; }
.place h3 { margin: 0 0 7px; font-size: 14px; line-height: 16px; font-weight: 500; color: #000; }
.place p { margin: 0; color: #5b5b5b; }
.place a, .directions { color: #1a73e8; }
.rating { display: flex; align-items: center; margin-top: 7px; }
.rating span { font-size: 14px; color: #5b5b5b; width: 23px; font-weight: 500; }
.rating a { margin-left: 11px; }
.larger { display: block; margin-top: 11px; }
.directions { display: flex; flex-direction: column; align-items: center; gap: 5px; padding-top: 4px; }
.sat { position: absolute; left: 10px; top: 247px; width: 42px; height: 41px; }
.zoomctl { position: absolute; left: 538px; top: 195px; width: 40px; height: 81px; background: #fff; box-shadow: 0 1px 4px rgba(0, 0, 0, .3); display: flex; flex-direction: column; padding: 0 5px; }
.zoomctl span { flex: 1; display: flex; align-items: center; justify-content: center; }
.zoomctl span + span { border-top: 1px solid #e6e6e6; }
.credits { position: absolute; right: 0; bottom: 0; height: 14px; padding: 0 6px; display: flex; gap: 12px; font-size: 10px; line-height: 14px; color: #000; background: rgba(245, 245, 245, .7); }
.footer { width: 1653px; height: 178px; }
.floaters { position: absolute; right: 10px; top: 48px; display: flex; flex-direction: column; gap: 10px; }
.floaters i { width: 40px; height: 40px; border-radius: 50%; background: #144bb0; color: #fff; display: flex; align-items: center; justify-content: center; box-shadow: 0 2px 5px rgba(0, 0, 0, .25); }
.wa { color: #144bb0; }
.mailbtn { position: absolute; left: 1573px; top: 837px; width: 60px; height: 60px; border-radius: 50%; background: #418592; display: flex; align-items: center; justify-content: center; box-shadow: 0 2px 14px rgba(0, 0, 0, .25); }
.scrollbar { width: 17px; background: #f1f1f1; display: flex; flex-direction: column; align-items: center; padding: 8px 0 7px; }
.thumb { width: 13px; height: 630px; background: #c1c1c1; margin: 5px 0 auto; }

/* taskbar */
.taskbar { height: 40px; flex: none; display: flex; gap: 5px; background: linear-gradient(90deg, #20373e 0, #21363f 50%, #1c2a42 75%, #1a2942); color: #fff; font-size: 12px; letter-spacing: -.35px; word-spacing: .7px; }
.pinned { width: 241px; display: flex; align-items: center; gap: 26px; padding-left: 16px; }
.pinned svg:nth-child(2) { margin-left: 5px; }
.pinned svg:nth-child(3) { margin-left: 6px; }
.task { width: 152px; margin-right: 4px; display: flex; align-items: center; gap: 4px; padding-left: 5px; border-bottom: 2px solid #76b9ed; white-space: nowrap; }
.task.on { width: 160px; margin-right: 0; background: #4d6168; padding-left: 10px; gap: 2px; }
.task.last { padding-left: 7px; }
.tray { margin-left: auto; display: flex; align-items: center; width: 365px; border-right: 1px solid #59647a; margin-right: 4px; padding-left: 4px; }
.weather { margin-left: 6px; font-size: 14px; letter-spacing: -.2px; width: 150px; white-space: nowrap; }
.net { margin-left: 9px; }
.vol { margin-left: 7px; }
.clock { display: flex; flex-direction: column; align-items: center; line-height: 18px; width: 60px; margin-left: 7px; }
.note { margin-left: 13px; margin-top: 2px; }
```
